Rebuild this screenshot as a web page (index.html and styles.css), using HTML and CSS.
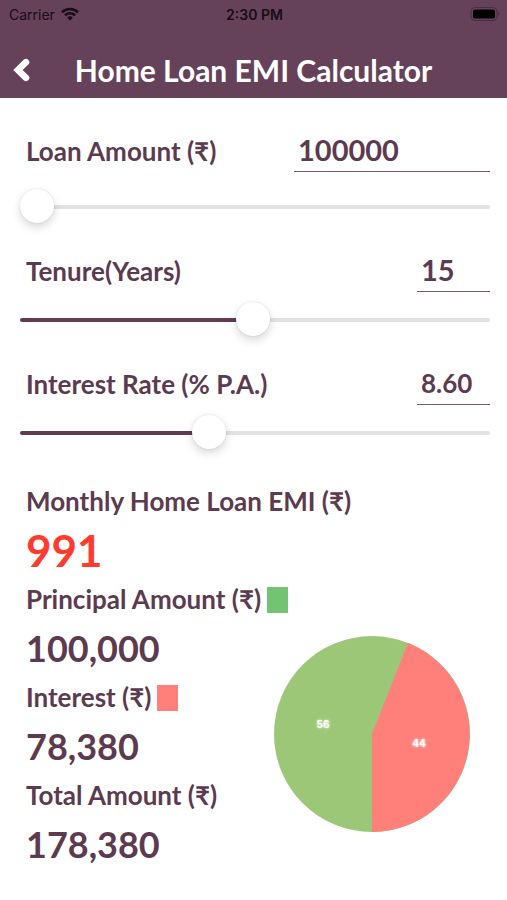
FILE: index.html
```
<!DOCTYPE html>
<html lang="en">
<head>
  <meta charset="UTF-8">
  <meta name="viewport" content="width=device-width, initial-scale=1.0">
  <title>Home Loan EMI Calculator</title>
  <link rel="stylesheet" href="styles.css">
</head>
<body>
  <header>
    <div class="status">
      <div class="carrier">
        <span>Carrier</span>
        <svg width="18" height="14" viewBox="0 0 18 14" fill="none" stroke="currentColor" stroke-width="2.6">
          <path d="M1 5.2a11.5 11.5 0 0 1 16 0"/>
          <path d="M4 8.3a7.2 7.2 0 0 1 10 0"/>
          <path d="M9 13.6 6.2 10.7a4 4 0 0 1 5.6 0z" fill="currentColor" stroke="none"/>
        </svg>
      </div>
      <div class="time">2:30 PM</div>
      <svg class="battery" width="30" height="14" viewBox="0 0 30 14">
        <rect x="1" y="0.5" width="26" height="13" rx="4" fill="none" stroke="#4a2d41"/>
        <rect x="3" y="2.5" width="22" height="9" rx="2" fill="#000"/>
        <path d="M28 4.5q2 2.5 0 5z" fill="#4a2d41"/>
      </svg>
    </div>
    <div class="titlebar">
      <button class="back" type="button" aria-label="Back">
        <svg width="18" height="24" viewBox="0 0 18 24" fill="none" stroke="#fff" stroke-width="6.6" stroke-linecap="round">
          <path d="M13 4.2 5 12l8 7.8"/>
        </svg>
      </button>
      <h1>Home Loan EMI Calculator</h1>
    </div>
  </header>

  <main>
    <form>
      <div class="field amount">
        <div class="row">
          <label for="amount">Loan Amount (₹)</label>
          <input class="value wide" type="text" id="amount" value="100000">
        </div>
        <input class="slider" type="range" aria-label="Loan amount" min="100000" max="10000000" value="100000" style="--fill: 0%">
      </div>

      <div class="field">
        <div class="row">
          <label for="tenure">Tenure(Years)</label>
          <input class="value" type="text" id="tenure" value="15">
        </div>
        <input class="slider" type="range" aria-label="Tenure" min="1" max="30" step="any" value="15.35" style="--fill: 49%">
      </div>

      <div class="field">
        <div class="row">
          <label for="rate">Interest Rate (% P.A.)</label>
          <input class="value small" type="text" id="rate" value="8.60">
        </div>
        <input class="slider" type="range" aria-label="Interest rate" min="5" max="14" step="any" value="8.55" style="--fill: 40%">
      </div>
    </form>

    <section class="results">
      <dl>
        <dt>Monthly Home Loan EMI (₹)</dt>
        <dd class="emi">991</dd>
        <dt>Principal Amount (₹) <span class="key principal"></span></dt>
        <dd>100,000</dd>
        <dt>Interest (₹) <span class="key interest"></span></dt>
        <dd>78,380</dd>
        <dt>Total Amount (₹)</dt>
        <dd>178,380</dd>
      </dl>
      <svg class="chart" viewBox="0 0 196 196" role="img" aria-label="Principal 56, interest 44">
        <circle cx="98" cy="98" r="98" fill="#9cc777"/>
        <path d="M98 98 134 7A98 98 0 0 1 98 196z" fill="#ff807a"/>
        <text x="49" y="92">56</text>
        <text x="145" y="111">44</text>
      </svg>
    </section>
  </main>
</body>
</html>
```
FILE: styles.css
```
* { box-sizing: border-box; }
body {
  margin: 0;
  background: #fff;
  color: #5c3a50;
  font-family: Optima, Lato, sans-serif;
  font-weight: bold;
}
header {
  background: #66415a;
  color: #fff;
}
.status {
  display: grid;
  grid-template-columns: 1fr auto 1fr;
  align-items: center;
  height: 28px;
  padding: 0 7px 0 9px;
  color: #170d14;
  font-family: Inter, sans-serif;
  font-size: 14px;
}
.carrier {
  display: flex;
  align-items: center;
  gap: 6px;
  font-weight: normal;
}
.time { font-weight: 600; }
.battery { justify-self: end; }
.titlebar {
  display: grid;
  grid-template-columns: 40px 1fr 40px;
  align-items: center;
  height: 70px;
  padding-top: 14px;
}
.back {
  display: flex;
  padding: 0 0 0 13px;
  border: none;
  background: none;
  cursor: pointer;
}
h1 {
  margin: 0;
  font-size: 30px;
  line-height: 40px;
  text-align: center;
}
form {
  display: grid;
  gap: 24px;
  padding: 30px 17px 0 20px;
}
.field {
  display: grid;
  gap: 11px;
}
.amount { gap: 18px; }
.row {
  display: flex;
  justify-content: space-between;
  height: 44px;
  padding-left: 6px;
}
label, dt { font-size: 26px; }
label { line-height: 46px; }
.value {
  width: 73px;
  padding: 0 4px;
  border: none;
  border-bottom: 1px solid #77586c;
  border-radius: 0;
  background: none;
  color: inherit;
  font: inherit;
  font-size: 29px;
  outline: none;
}
.wide { width: 196px; }
.small { font-size: 26px; }
.slider {
  -webkit-appearance: none;
  appearance: none;
  width: 100%;
  height: 34px;
  margin: 0;
  background: none;
}
.slider::-webkit-slider-runnable-track {
  height: 4px;
  border-radius: 2px;
  background: linear-gradient(to right, #5f3c54 var(--fill), #e2e2e2 var(--fill));
}
.slider::-webkit-slider-thumb {
  -webkit-appearance: none;
  width: 34px;
  height: 34px;
  margin-top: -16px;
  border-radius: 50%;
  background: #fff;
  box-shadow: 0 4px 10px rgba(0, 0, 0, 0.16), 0 0 2px rgba(0, 0, 0, 0.12);
}
.results {
  display: grid;
  padding: 27px 37px 30px 26px;
}
dl, .chart { grid-area: 1 / 1; }
dl {
  margin: 0;
  line-height: 49px;
}
dt {
  display: flex;
  align-items: center;
  gap: 6px;
}
dd {
  height: 49px;
  margin: 0;
  font-size: 36px;
}
.emi {
  color: #ff3b30;
  font-size: 44px;
}
.key {
  width: 21px;
  height: 26px;
}
.principal { background: #72c472; }
.interest { background: #ff807a; }
.chart {
  align-self: end;
  justify-self: end;
  width: 196px;
  margin-bottom: 37px;
}
.chart text {
  fill: #fff;
  font-family: Inter, sans-serif;
  font-size: 10px;
  text-anchor: middle;
  text-shadow: 0 0 3px #fff;
}
```
